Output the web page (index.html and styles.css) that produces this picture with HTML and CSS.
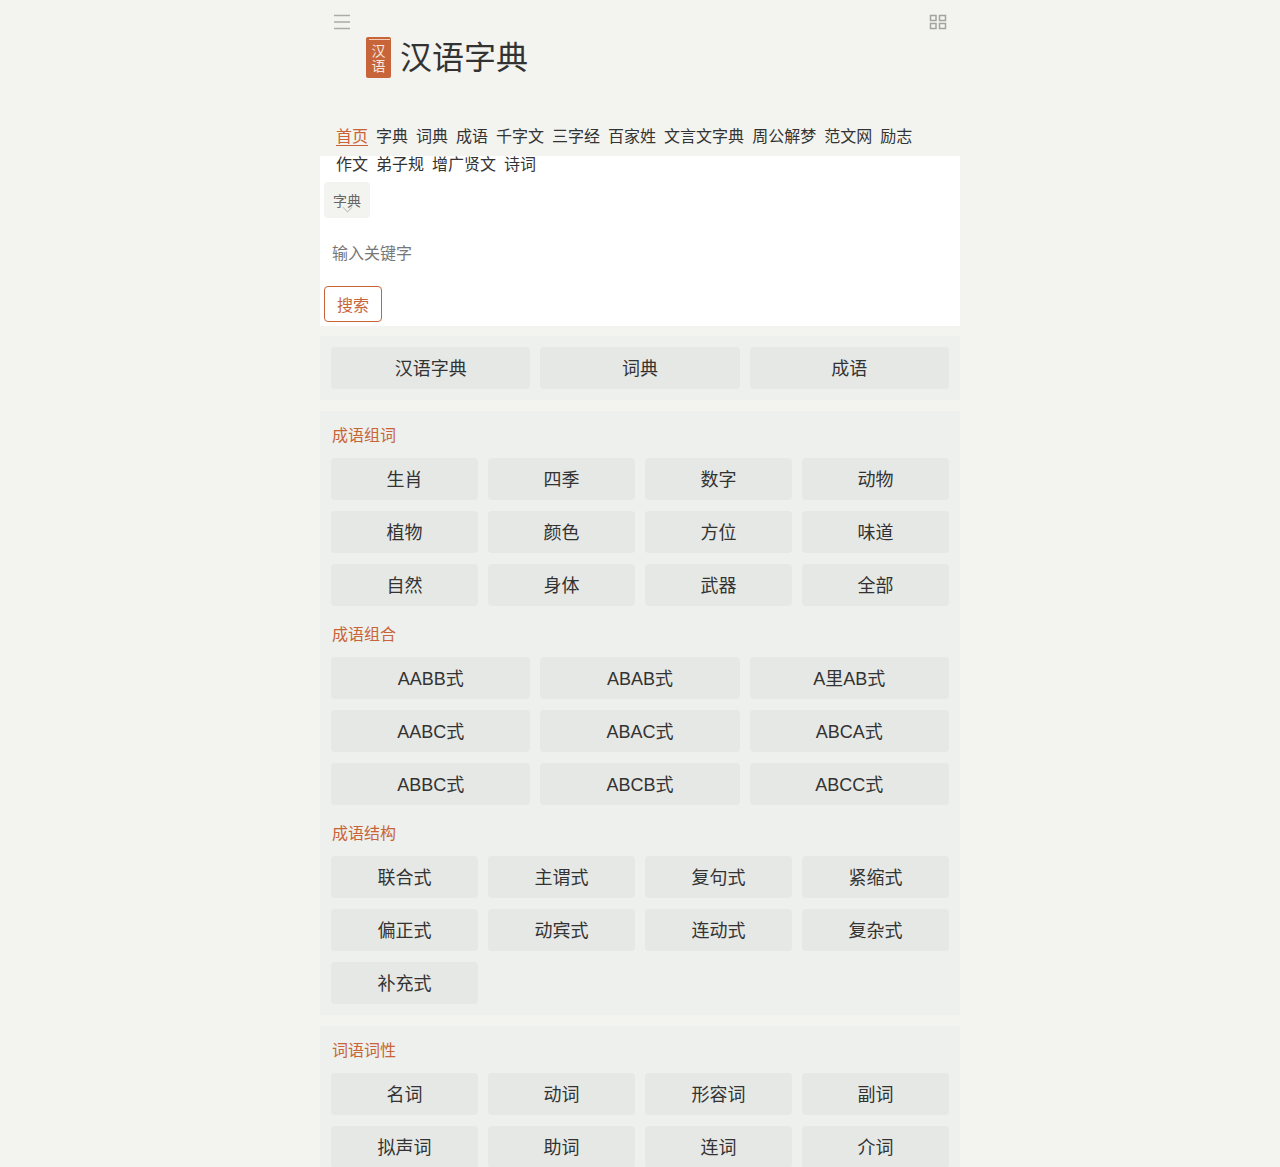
FILE: index.html
```html
<!DOCTYPE html>
<html lang="zh-CN">
<head>
  <meta charset="UTF-8">
  <meta name="viewport" content="width=device-width, initial-scale=1.0">
  <title>汉语字典</title>
  <link rel="stylesheet" href="styles.css">
</head>
<body>

  <div class="container">
    <header class="header">
      <div class="top-bar">
        <svg class="menu-icon" width="18" height="16" viewBox="0 0 18 16" aria-hidden="true">
          <path d="M1 1.500h16M1 8h16M1 14.500h16" stroke="#aaaaa6" stroke-width="1.600" fill="none"/>
        </svg>
        <svg class="grid-icon" width="18" height="16" viewBox="0 0 18 16" aria-hidden="true">
          <path d="M1.500 1.500h5.500v5h-5.500zM10.500 1.500h6v5h-6zM1.500 9.500h5.500v5h-5.500zM10.500 9.500h6v5h-6z" stroke="#a3a3a0" stroke-width="1.500" fill="none"/>
        </svg>
      </div>
      <div class="logo">
        <div class="logo-mark"><span>汉</span><span>语</span></div>
        <div class="logo-text">汉语字典</div>
      </div>
      <nav class="nav">
        <a class="nav-link active">首页</a>
        <a class="nav-link">字典</a>
        <a class="nav-link">词典</a>
        <a class="nav-link">成语</a>
        <a class="nav-link">千字文</a>
        <a class="nav-link">三字经</a>
        <a class="nav-link">百家姓</a>
        <a class="nav-link">文言文字典</a>
        <a class="nav-link">周公解梦</a>
        <a class="nav-link">范文网</a>
        <a class="nav-link">励志</a>
        <a class="nav-link">作文</a>
        <a class="nav-link">弟子规</a>
        <a class="nav-link">增广贤文</a>
        <a class="nav-link">诗词</a>
      </nav>
    </header>

    <div class="search">
      <div class="search-type">字典<span class="chevron"></span></div>
      <input class="search-input" type="text" placeholder="输入关键字">
      <button class="search-button">搜索</button>
    </div>

    <section class="panel panel-tabs">
      <div class="grid three">
        <a class="tile">汉语字典</a>
        <a class="tile">词典</a>
        <a class="tile">成语</a>
      </div>
    </section>

    <section class="panel">
      <h2 class="panel-title">成语组词</h2>
      <div class="grid four">
        <a class="tile">生肖</a>
        <a class="tile">四季</a>
        <a class="tile">数字</a>
        <a class="tile">动物</a>
        <a class="tile">植物</a>
        <a class="tile">颜色</a>
        <a class="tile">方位</a>
        <a class="tile">味道</a>
        <a class="tile">自然</a>
        <a class="tile">身体</a>
        <a class="tile">武器</a>
        <a class="tile">全部</a>
      </div>
      <h2 class="panel-title">成语组合</h2>
      <div class="grid three">
        <a class="tile">AABB式</a>
        <a class="tile">ABAB式</a>
        <a class="tile">A里AB式</a>
        <a class="tile">AABC式</a>
        <a class="tile">ABAC式</a>
        <a class="tile">ABCA式</a>
        <a class="tile">ABBC式</a>
        <a class="tile">ABCB式</a>
        <a class="tile">ABCC式</a>
      </div>
      <h2 class="panel-title">成语结构</h2>
      <div class="grid four">
        <a class="tile">联合式</a>
        <a class="tile">主谓式</a>
        <a class="tile">复句式</a>
        <a class="tile">紧缩式</a>
        <a class="tile">偏正式</a>
        <a class="tile">动宾式</a>
        <a class="tile">连动式</a>
        <a class="tile">复杂式</a>
        <a class="tile">补充式</a>
      </div>
    </section>

    <section class="panel">
      <h2 class="panel-title">词语词性</h2>
      <div class="grid four">
        <a class="tile">名词</a>
        <a class="tile">动词</a>
        <a class="tile">形容词</a>
        <a class="tile">副词</a>
        <a class="tile">拟声词</a>
        <a class="tile">助词</a>
        <a class="tile">连词</a>
        <a class="tile">介词</a>
      </div>
    </section>
  </div>

</body>
</html>
```

FILE: styles.css
```css
html,
body {
  height: 100%;
  overflow: hidden;
}

body {
  margin: 0;
  background: #f3f3ef;
  color: #333;
  font-family: "Liberation Sans", "Noto Sans CJK SC", sans-serif;
}

.container {
  width: 640px;
  margin: 0 auto;
}

.header {
  height: 156px;
}

.top-bar {
  display: flex;
  justify-content: space-between;
  padding: 14px 13px 0 13px;
  height: 22px;
}

.logo {
  display: flex;
  align-items: flex-start;
  gap: 9px;
  padding-left: 46px;
}

.logo-mark {
  position: relative;
  width: 25px;
  height: 41px;
  margin-top: 1px;
  padding-top: 7px;
  box-sizing: border-box;
  background: #c8643a;
  color: #f6e6dc;
  font-size: 14px;
  line-height: 15px;
  text-align: center;
  border-radius: 2px;
}

.logo-mark span {
  display: block;
}

.logo-mark::before {
  content: "";
  position: absolute;
  left: 3px;
  right: 1px;
  top: 2px;
  border-top: 1px solid #f0cdb9;
}

.logo-text {
  font-size: 32px;
  line-height: 44px;
  color: #333;
}

.nav {
  display: flex;
  flex-wrap: wrap;
  gap: 0 8px;
  width: 600px;
  margin-top: 43px;
  padding-left: 16px;
}

.nav-link {
  font-size: 16px;
  line-height: 28px;
  height: 28px;
}

.nav-link.active {
  color: #c8643a;
  text-decoration: underline;
  text-underline-offset: 3px;
}

.search {
  height: 170px;
  background: #fff;
  padding: 26px 4px 0;
  box-sizing: border-box;
}

.search-type {
  position: relative;
  width: 46px;
  height: 36px;
  background: #f3f3ef;
  border-radius: 4px;
  font-size: 14px;
  line-height: 38px;
  text-align: center;
  color: #666;
}

.chevron {
  position: absolute;
  left: 20px;
  top: 22px;
  width: 6px;
  height: 6px;
  border-right: 1.500px solid #c4c4c0;
  border-bottom: 1.500px solid #c4c4c0;
  transform: rotate(45deg);
}

.search-input {
  display: block;
  width: 300px;
  height: 36px;
  margin: 18px 0 14px;
  padding: 0 8px;
  border: 0;
  outline: 0;
  background: transparent;
  font: 16px "Liberation Sans", "Noto Sans CJK SC", sans-serif;
}

.search-input::placeholder {
  color: #777;
}

.search-button {
  display: block;
  width: 58px;
  height: 36px;
  padding: 0;
  background: #fff;
  border: 1px solid #c8643a;
  border-radius: 4px;
  color: #c8643a;
  font: 16px "Liberation Sans", "Noto Sans CJK SC", sans-serif;
}

.panel {
  margin-top: 11px;
  padding: 0 11px 11px;
  background: #edf0ec;
}

.panel-tabs {
  margin-top: 10px;
  padding-top: 11px;
}

.panel-title {
  margin: 4px 0 0;
  padding: 2px 0 0 1px;
  font-size: 16px;
  font-weight: 400;
  line-height: 45px;
  color: #c8643a;
}

.panel-title:first-child {
  margin-top: 0;
}

.grid {
  display: grid;
  gap: 11px 10px;
}

.three {
  grid-template-columns: repeat(3, 1fr);
}

.four {
  grid-template-columns: repeat(4, 1fr);
}

.tile {
  height: 42px;
  line-height: 44px;
  background: #e6e8e5;
  border-radius: 4px;
  font-size: 18px;
  text-align: center;
  color: #333;
}
```
